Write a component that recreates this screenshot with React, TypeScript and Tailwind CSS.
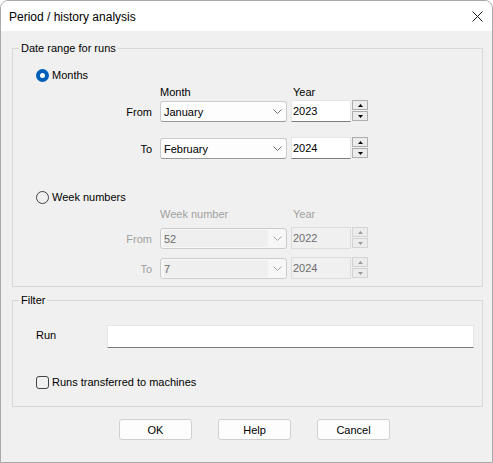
import React from "react";

const FONT = "[font-family:'Liberation_Sans',Arial,sans-serif]";

function Chevron({ disabled }: { disabled?: boolean }) {
  return (
    <svg width="9" height="5" viewBox="0 0 9 5" className="shrink-0">
      <polyline
        points="0.5,0.5 4.5,4.5 8.5,0.5"
        fill="none"
        stroke={disabled ? "#a8a8a8" : "#707070"}
        strokeWidth="1"
      />
    </svg>
  );
}

function Spin({ disabled }: { disabled?: boolean }) {
  const border = disabled ? "border-[#d3d3d3]" : "border-[#adadad]";
  const fill = disabled ? "#9a9a9a" : "#000";
  return (
    <div className="ml-[1px] flex w-[16px] flex-col gap-[1px] self-start">
      <div className={`flex h-[10px] items-center justify-center border ${border} bg-[#ececec]`}>
        <svg width="5" height="3" viewBox="0 0 5 3">
          <polygon points="2.5,0 5,3 0,3" fill={fill} />
        </svg>
      </div>
      <div className={`flex h-[10px] items-center justify-center border ${border} bg-[#ececec]`}>
        <svg width="5" height="3" viewBox="0 0 5 3">
          <polygon points="0,0 5,0 2.5,3" fill={fill} />
        </svg>
      </div>
    </div>
  );
}

function DateRow({
  label,
  value,
  year,
  disabled,
  className,
}: {
  label: string;
  value: string;
  year: string;
  disabled?: boolean;
  className?: string;
}) {
  return (
    <div className={`flex h-[22px] items-end ${className ?? ""}`}>
      <div
        className={`w-[116px] self-center pt-[1px] text-right ${disabled ? "text-[#a0a0a0]" : "text-black"}`}
      >
        {label}
      </div>
      <div
        className={`ml-[8px] flex h-[21px] w-[127px] items-center justify-between rounded-[3px] border pl-[3px] pr-[4px] ${
          disabled
            ? "border-[#cccccc] bg-[#f7f7f7] text-[#6d6d6d]"
            : "border-[#cbcbcb] border-b-[#9a9a9a] bg-[#fdfdfd] text-black"
        }`}
      >
        <span className={disabled ? "flex h-[17px] w-[104px] items-center bg-[#efefef]" : ""}>
          {value}
        </span>
        <Chevron disabled={disabled} />
      </div>
      <div
        className={`ml-[4px] flex h-[22px] w-[60px] items-center border pl-[1px] ${
          disabled
            ? "border-[#dcdcdc] bg-[#f0f0f0] text-[#6d6d6d]"
            : "border-[#e6e6e6] border-b-[#7c7c7c] bg-white text-black"
        }`}
      >
        {year}
      </div>
      <Spin disabled={disabled} />
    </div>
  );
}

function Radio({ checked, label, className }: { checked?: boolean; label: string; className?: string }) {
  return (
    <div className={`flex h-[14px] items-center ${className ?? ""}`}>
      {checked ? (
        <div className="flex h-[13px] w-[13px] items-center justify-center rounded-full bg-[#005fb8]">
          <div className="h-[5px] w-[5px] rounded-full bg-white" />
        </div>
      ) : (
        <div className="h-[13px] w-[13px] rounded-full border border-[#444444]" />
      )}
      <span className="ml-[3px]">{label}</span>
    </div>
  );
}

function Group({ title, className, children }: { title: string; className?: string; children: React.ReactNode }) {
  return (
    <div className={`relative ml-[11px] w-[471px] border border-[#d8d8d8] ${className ?? ""}`}>
      <span className="absolute -top-[8px] left-[6px] bg-[#f0f0f0] px-[2px] leading-[14px]">{title}</span>
      {children}
    </div>
  );
}

export default function App() {
  return (
    <div
      className={`${FONT} flex h-[463px] w-[493px] flex-col overflow-hidden rounded-t-[8px] border border-[#a9a9a9] bg-[#f0f0f0] text-[11px] leading-[14px] text-black`}
    >
      {/* title bar */}
      <div className="flex h-[30px] shrink-0 items-center justify-between bg-white pl-[8px] pr-[9px] text-[12px]">
        <span className="pt-[1px]">Period / history analysis</span>
        <svg width="11" height="11" viewBox="0 0 11 11">
          <path d="M0.5 0.5 L10.5 10.5 M10.5 0.5 L0.5 10.5" stroke="#1a1a1a" strokeWidth="1" />
        </svg>
      </div>

      {/* date range */}
      <Group title="Date range for runs" className="mt-[17px] h-[239px]">
        <div className="flex flex-col pl-[23px]">
          <Radio checked label="Months" className="mt-[19px]" />
          <div className="mt-[3px] flex h-[14px]">
            <span className="ml-[124px] w-[133px]">Month</span>
            <span>Year</span>
          </div>
          <DateRow label="From" value="January" year="2023" className="mt-[1px]" />
          <DateRow label="To" value="February" year="2024" className="mt-[15px]" />

          <Radio label="Week numbers" className="mt-[31px]" />
          <div className="mt-[3px] flex h-[14px] text-[#a0a0a0]">
            <span className="ml-[124px] w-[133px]">Week number</span>
            <span>Year</span>
          </div>
          <DateRow label="From" value="52" year="2022" disabled className="mt-[6px]" />
          <DateRow label="To" value="7" year="2024" disabled className="mt-[8px]" />
        </div>
      </Group>

      {/* filter */}
      <Group title="Filter" className="mt-[13px]">
        <div className="flex flex-col pl-[23px]">
          <div className="mt-[24px] flex h-[23px] items-center">
            <span className="w-[71px] pb-[4px]">Run</span>
            <div className="h-[23px] w-[367px] border border-[#e6e6e6] border-b-[#7c7c7c] bg-white" />
          </div>
          <div className="mb-[17px] mt-[27px] flex h-[14px] items-center">
            <div className="h-[13px] w-[13px] rounded-[3px] border border-[#444444]" />
            <span className="ml-[3px]">Runs transferred to machines</span>
          </div>
        </div>
      </Group>

      {/* buttons */}
      <div className="ml-[118px] mt-[12px] flex gap-[26px]">
        {["OK", "Help", "Cancel"].map((b) => (
          <button
            key={b}
            className="flex h-[21px] w-[73px] items-center justify-center rounded-[3px] border border-[#d0d0d0] bg-[#fdfdfd]"
          >
            {b}
          </button>
        ))}
      </div>
    </div>
  );
}
